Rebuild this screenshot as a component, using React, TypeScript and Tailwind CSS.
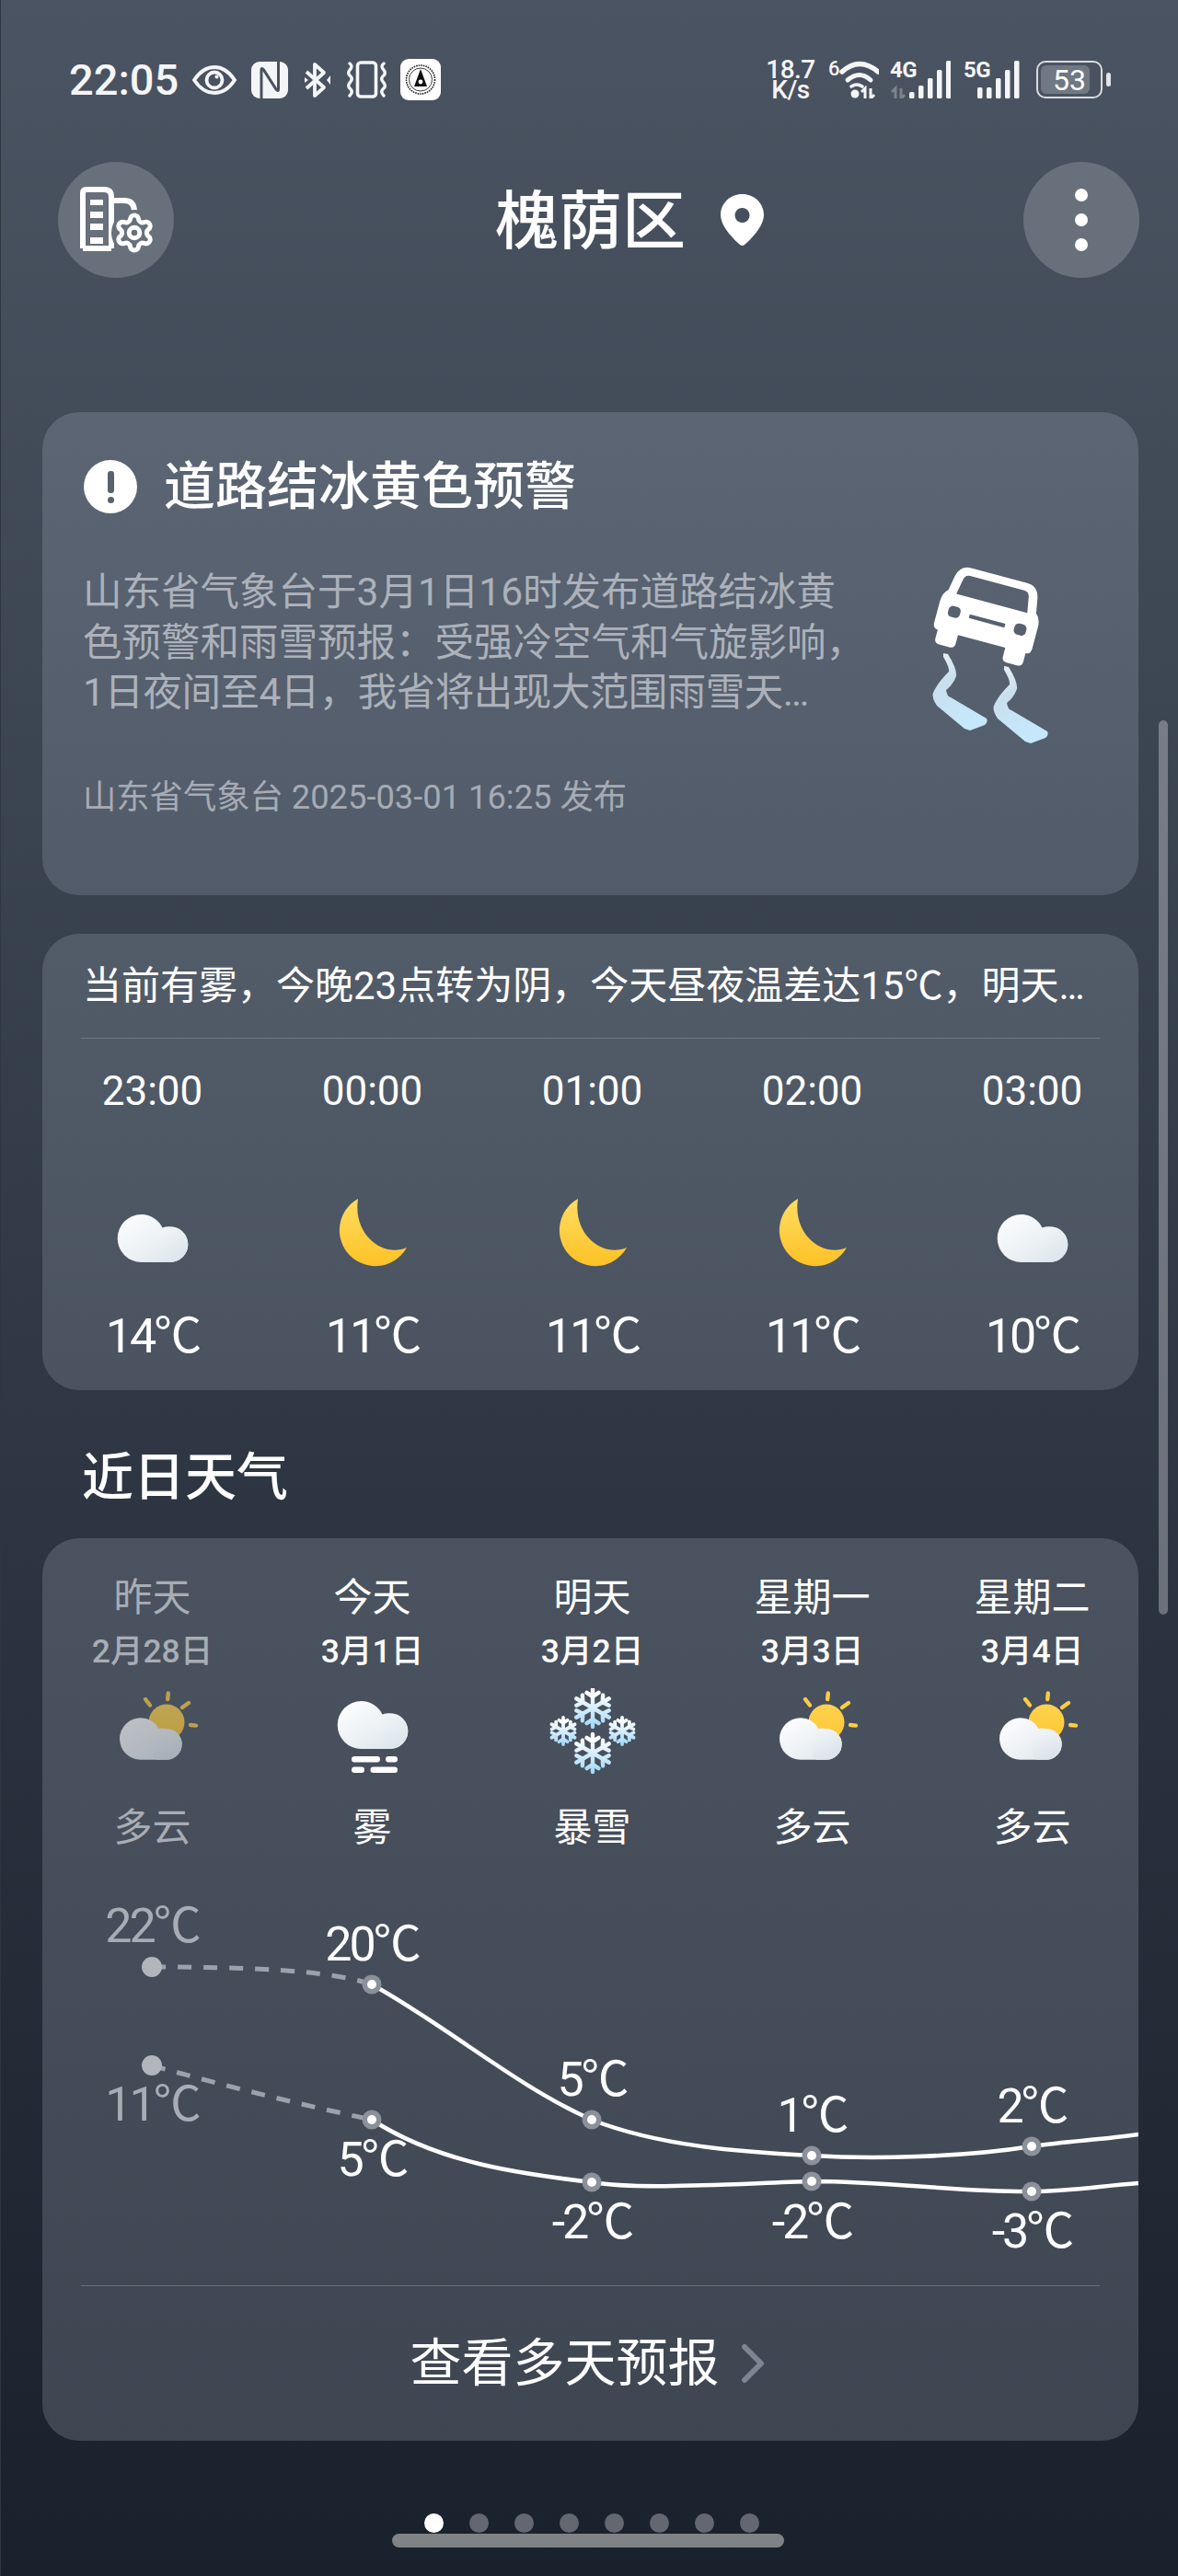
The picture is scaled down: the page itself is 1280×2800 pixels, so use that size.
import { Settings } from "lucide-react";

const hours = [
  { time: "23:00", temp: "14℃", icon: "cloud" },
  { time: "00:00", temp: "11℃", icon: "moon" },
  { time: "01:00", temp: "11℃", icon: "moon" },
  { time: "02:00", temp: "11℃", icon: "moon" },
  { time: "03:00", temp: "10℃", icon: "cloud" },
];

const days = [
  { name: "昨天", date: "2月28日", text: "多云", icon: "partly", past: true },
  { name: "今天", date: "3月1日", text: "雾", icon: "fog", past: false },
  { name: "明天", date: "3月2日", text: "暴雪", icon: "snow", past: false },
  { name: "星期一", date: "3月3日", text: "多云", icon: "partly", past: false },
  { name: "星期二", date: "3月4日", text: "多云", icon: "partly", past: false },
];

// chart markers, in the svg's own coordinates
const highs = [
  { x: 119, y: 127, label: "22℃", ly: 82 },
  { x: 358, y: 146, label: "20℃", ly: 102 },
  { x: 597, y: 293, label: "5℃", ly: 249 },
  { x: 836, y: 332, label: "1℃", ly: 288 },
  { x: 1075, y: 322, label: "2℃", ly: 278 },
];
const lows = [
  { x: 119, y: 234, label: "11℃", ly: 276 },
  { x: 358, y: 293, label: "5℃", ly: 336 },
  { x: 597, y: 361, label: "-2℃", ly: 404 },
  { x: 836, y: 360, label: "-2℃", ly: 404 },
  { x: 1075, y: 371, label: "-3℃", ly: 414 },
];

function CloudShape({ dy = 0 }: { dy?: number }) {
  return (
    <g transform={`translate(0 ${dy})`}>
      <defs>
        <linearGradient id="fogCloud" x1="0" y1="0" x2="1" y2="1">
          <stop offset="0" stopColor="#ffffff" />
          <stop offset="1" stopColor="#dbe5eb" />
        </linearGradient>
        <linearGradient id="fogLobe" x1="0" y1="0" x2="0.6" y2="1">
          <stop offset="0" stopColor="#f5f7f9" />
          <stop offset="1" stopColor="#dce6ec" />
        </linearGradient>
      </defs>
      <path
        d="M37.7,66 A26,26 0 0 1 37.7,14 A26,26 0 0 1 60.5,28.5 A19.3,19.3 0 0 1 69,27.4 A19.3,19.3 0 0 1 69,66 Z"
        fill="url(#fogCloud)"
      />
      <path d="M69,66 A19.3,19.3 0 0 0 69,27.4 A19.3,19.3 0 0 0 52.7,57 Q51,63 56,66 Z" fill="url(#fogLobe)" />
    </g>
  );
}

function PartlyIcon() {
  return (
    <svg viewBox="0 0 100 100" className="w-[100px] h-[100px]">
      <defs>
        <linearGradient id="sunFill" x1="0" y1="0" x2="0" y2="1">
          <stop offset="0" stopColor="#ffd34f" />
          <stop offset="1" stopColor="#fdc632" />
        </linearGradient>
        <linearGradient id="partCloud" x1="0" y1="0" x2="1" y2="1">
          <stop offset="0" stopColor="#ffffff" />
          <stop offset="1" stopColor="#dde6eb" />
        </linearGradient>
        <linearGradient id="partLobe" x1="0" y1="0" x2="0.5" y2="1">
          <stop offset="0" stopColor="#f4f6f8" />
          <stop offset="1" stopColor="#dbe4ea" />
        </linearGradient>
      </defs>
      <circle cx="65" cy="37" r="19.5" fill="url(#sunFill)" />
      <g stroke="#fdcb45" strokeWidth="4.4" strokeLinecap="round">
        <path d="M66.8,5.5 L66.2,12" />
        <path d="M42,12 L47,18.5" />
        <path d="M82,21 L89,16" />
        <path d="M91,40 L97,40.6" />
      </g>
      <path
        d="M36.7,77.7 A22.7,22.7 0 0 1 36.7,32.3 A22.7,22.7 0 0 1 56.5,44 A16.7,16.7 0 0 1 65,44.3 A16.7,16.7 0 0 1 65,77.7 Z"
        fill="url(#partCloud)"
      />
      <path d="M65,77.7 A16.7,16.7 0 0 0 65,44.3 A16.7,16.7 0 0 0 49.5,67 Q49,73 54,77.7 Z" fill="url(#partLobe)" />
    </svg>
  );
}

function FogIcon() {
  return (
    <svg viewBox="0 0 100 100" className="w-[100px] h-[100px]">
      <CloudShape />
      <g fill="#ffffff">
        <rect x="27" y="74" width="31" height="6.4" rx="3.2" />
        <rect x="64" y="74" width="13" height="6.4" rx="3.2" />
        <rect x="27" y="85.5" width="14" height="6.4" rx="3.2" />
        <rect x="47.5" y="85.5" width="29.5" height="6.4" rx="3.2" />
      </g>
    </svg>
  );
}

function flakePath(cx: number, cy: number, r: number) {
  let d = "";
  for (let i = 0; i < 6; i++) {
    const a = (i * Math.PI) / 3 - Math.PI / 2;
    const tip = [cx + r * Math.cos(a), cy + r * Math.sin(a)];
    d += `M${cx},${cy} L${tip[0]},${tip[1]} `;
    for (const side of [-1, 1]) {
      const bx = cx + r * 0.6 * Math.cos(a);
      const by = cy + r * 0.6 * Math.sin(a);
      const b = a + (side * Math.PI) / 3.2;
      d += `M${bx},${by} L${bx + r * 0.38 * Math.cos(b)},${by + r * 0.38 * Math.sin(b)} `;
    }
  }
  return d;
}

function SnowIcon() {
  const flakes = [
    { x: 50, y: 21.5, r: 20.5, w: 4.4 },
    { x: 18, y: 46.5, r: 14.5, w: 3.8 },
    { x: 82, y: 46.5, r: 14.5, w: 3.8 },
    { x: 50, y: 70.5, r: 20.5, w: 4.4 },
  ];
  return (
    <svg viewBox="0 0 100 100" className="w-[100px] h-[100px]">
      <defs>
        <linearGradient id="flake" x1="0" y1="0" x2="0" y2="1">
          <stop offset="0.1" stopColor="#ffffff" />
          <stop offset="1" stopColor="#a3d9f9" />
        </linearGradient>
      </defs>
      {flakes.map((f) => (
        <path
          key={`${f.x}-${f.y}`}
          d={flakePath(f.x, f.y, f.r)}
          stroke="url(#flake)"
          strokeWidth={f.w}
          strokeLinecap="round"
          fill="none"
        />
      ))}
    </svg>
  );
}

function MoonIcon() {
  return (
    <svg viewBox="0 0 100 100" className="w-[100px] h-[100px]">
      <defs>
        <linearGradient id="moonFill" x1="0" y1="0" x2="0" y2="1">
          <stop offset="0" stopColor="#ffdc62" />
          <stop offset="1" stopColor="#fdc226" />
        </linearGradient>
      </defs>
      <path
        d="M34,12 A39,39 0 1 0 87,65 C62,76 28,52 34,12 Z"
        fill="url(#moonFill)"
      />
    </svg>
  );
}

function BuildingIcon() {
  return (
    <svg viewBox="0 0 126 126" className="w-[126px] h-[126px]" fill="none">
      <g stroke="#ffffff" strokeWidth="6">
        <path d="M27,94 V34 Q27,30 31,30 H50 Q58,30 58,38 V94" strokeLinejoin="round" />
        <path d="M58,42 H72 Q83,42 83,54" strokeLinecap="round" />
        <path d="M27,94 H58" />
      </g>
      <g fill="#ffffff">
        <rect x="35" y="41" width="14" height="6" />
        <rect x="35" y="54" width="14" height="7" />
        <rect x="35" y="67" width="14" height="7" />
        <rect x="35" y="82" width="14" height="7" />
      </g>
      <circle cx="83" cy="77" r="25" fill="#67707b" />
      <Settings x={60} y={54} width={46} height={46} stroke="#ffffff" strokeWidth={2.6} />
    </svg>
  );
}

function CarIcon() {
  return (
    <svg viewBox="0 0 240 240" className="w-[240px] h-[240px] shrink-0 -mt-[37px]">
      <defs>
        <linearGradient id="track" x1="0" y1="0" x2="0.4" y2="1">
          <stop offset="0" stopColor="#f1f3f5" />
          <stop offset="0.4" stopColor="#c9dfee" />
          <stop offset="1" stopColor="#c6e8fc" />
        </linearGradient>
      </defs>
      <g transform="translate(115 86) rotate(15) scale(0.95)">
        <path
          fillRule="evenodd"
          fill="#ffffff"
          d="M-33,-44 L33,-44 Q46,-44 49,-30 L52,-13 Q58,-8 58,2 L58,27 Q58,34 52,34 L52,44 Q52,50 46,50 L34,50 Q28,50 28,44 L28,34 L-28,34 L-28,44 Q-28,50 -34,50 L-46,50 Q-52,50 -52,44 L-52,34 Q-58,34 -58,27 L-58,2 Q-58,-8 -52,-13 L-49,-30 Q-46,-44 -33,-44 Z M-32,-35 L32,-35 Q38,-35 39,-28 L42,-11 L-42,-11 L-39,-28 Q-38,-35 -32,-35 Z M-41,3 a5,5 0 0 0 -5,5 v3 a5,5 0 0 0 5,5 h4 a5,5 0 0 0 5,-5 v-3 a5,5 0 0 0 -5,-5 Z M37,3 a5,5 0 0 0 -5,5 v3 a5,5 0 0 0 5,5 h4 a5,5 0 0 0 5,-5 v-3 a5,5 0 0 0 -5,-5 Z M-21,7.5 h42 v4.5 h-42 Z"
        />
      </g>
      <path
        fill="url(#track)"
        d="M65,130 L70,131 Q80,147 79,155 Q75,165 68,170 Q69,177 73,178 L112,201 Q114,205 110,208 L94,214 L88,212 L58,187 Q52,178 54,173 Q58,163 71,150 Q72,146 65,134 Z"
      />
      <path
        fill="url(#track)"
        transform="translate(66 14)"
        d="M65,130 L70,131 Q80,147 79,155 Q75,165 68,170 Q69,177 73,178 L112,201 Q114,205 110,208 L94,214 L88,212 L58,187 Q52,178 54,173 Q58,163 71,150 Q72,146 65,134 Z"
      />
    </svg>
  );
}

function StatusLeftIcons() {
  return (
    <div className="flex items-center">
      {/* eye */}
      <svg viewBox="0 0 48 32" className="w-[48px] h-[32px] ml-[15px]" fill="none">
        <path
          d="M2,16 C10,4 18,2 24,2 C30,2 38,4 46,16 C38,28 30,30 24,30 C18,30 10,28 2,16 Z"
          stroke="#f4f5f7"
          strokeWidth="3.8"
        />
        <circle cx="24" cy="16" r="8.5" stroke="#f4f5f7" strokeWidth="3.8" />
        <circle cx="26.5" cy="12.5" r="2" fill="#f4f5f7" />
      </svg>
      {/* nfc */}
      <svg viewBox="0 0 40 40" className="w-[40px] h-[40px] ml-[16px]">
        <rect width="40" height="40" rx="9" fill="#f4f5f7" />
        <path
          d="M11,40 V9 Q11,6 13.5,9 L27,30 Q29.5,33 29.5,30 V0"
          fill="none"
          stroke="#49525e"
          strokeWidth="3"
        />
      </svg>
      {/* bluetooth */}
      <svg viewBox="0 0 32 40" className="w-[32px] h-[40px] ml-[15px]" fill="none">
        <path
          d="M5,11 L24,28 L14,37 V3 L24,12 L5,29"
          stroke="#f4f5f7"
          strokeWidth="3.8"
          strokeLinejoin="round"
        />
        <path d="M3,17 L7,20 L3,23 Z M31,15 L27,20 L31,25 Z" fill="#f4f5f7" />
      </svg>
      {/* vibrate */}
      <svg viewBox="0 0 47 41" className="w-[47px] h-[41px] ml-[15px]" fill="none" stroke="#f4f5f7">
        <rect x="13.5" y="2" width="20" height="37" rx="3.5" strokeWidth="3.6" />
        <path
          d="M5,3 Q9,6 5,10 Q2,14 6,17 Q9,20 5,24 Q2,28 6,31 Q9,34 5,38"
          strokeWidth="3.4"
          strokeLinecap="round"
        />
        <path
          d="M42,3 Q38,6 42,10 Q45,14 41,17 Q38,20 42,24 Q45,28 41,31 Q38,34 42,38"
          strokeWidth="3.4"
          strokeLinecap="round"
        />
      </svg>
      {/* app notification badge */}
      <svg viewBox="0 0 44 45" className="w-[44px] h-[45px] ml-[13px]" fill="none">
        <rect width="44" height="45" rx="9" fill="#ffffff" />
        <circle cx="22" cy="22.5" r="15.5" stroke="#222222" strokeWidth="1.6" strokeDasharray="1.6 1" />
        <circle cx="22" cy="22.5" r="12.5" stroke="#222222" strokeWidth="0.9" />
        <path d="M22,11 L29,30 H15 Z" fill="#111111" />
        <circle cx="22" cy="25" r="2.4" fill="#ffffff" />
      </svg>
    </div>
  );
}

function StatusRightIcons() {
  const bars4g = [
    { x: 0, h: 7 },
    { x: 10, h: 14 },
    { x: 20, h: 22 },
    { x: 30, h: 31 },
    { x: 40, h: 41 },
  ];
  const bars5g = [
    { x: 0, h: 12 },
    { x: 10, h: 12 },
    { x: 20, h: 22 },
    { x: 30, h: 31 },
    { x: 40, h: 41 },
  ];
  return (
    <div className="flex items-center font-medium text-[#f4f5f7]">
      <div className="flex flex-col items-center text-[28px] leading-[22px] w-[56px] tracking-[-0.5px]">
        <span>18.7</span>
        <span>K/s</span>
      </div>
      {/* wifi */}
      <div className="relative w-[55px] h-[41px] ml-[13px]">
        <span className="absolute left-0 top-[-5px] text-[22px] leading-[28px]">6</span>
        <svg viewBox="0 0 55 41" className="w-[55px] h-[41px]" fill="none">
          <path d="M15,12 Q34,-5 54,12" stroke="#f4f5f7" strokeWidth="5.5" strokeLinecap="round" />
          <path d="M21,21 Q34,10 46,21" stroke="#f4f5f7" strokeWidth="5" strokeLinecap="round" />
          <circle cx="29" cy="36" r="4.5" fill="#f4f5f7" />
          <path d="M25,28 Q31,24 37,28" stroke="#f4f5f7" strokeWidth="3.6" strokeLinecap="round" />
          <path d="M40,41 V30 L36,34 M46,30 V41 L50,37" stroke="#f4f5f7" strokeWidth="3" />
        </svg>
      </div>
      {/* first sim */}
      <div className="relative w-[66px] h-[41px] ml-[12px]">
        <span className="absolute left-0 top-[-5px] text-[24px] leading-[30px] font-bold tracking-[-0.5px]">4G</span>
        <svg viewBox="0 0 66 41" className="absolute left-0 top-0 w-[66px] h-[41px]" fill="none">
          <path d="M6,41 V30 L2,34 M12,30 V41 L16,37" stroke="#7b828c" strokeWidth="3" />
          {bars4g.map((b) => (
            <rect key={b.x} x={21 + b.x} y={41 - b.h} width="5.5" height={b.h} rx="1.5" fill="#f4f5f7" />
          ))}
        </svg>
      </div>
      {/* second sim */}
      <div className="relative w-[65px] h-[41px] ml-[14px]">
        <span className="absolute left-0 top-[-5px] text-[24px] leading-[30px] font-bold tracking-[-0.5px]">5G</span>
        <svg viewBox="0 0 65 41" className="absolute left-0 top-0 w-[65px] h-[41px]" fill="none">
          {bars5g.map((b) => (
            <rect key={b.x} x={15 + b.x} y={41 - b.h} width="5.5" height={b.h} rx="1.5" fill="#f4f5f7" />
          ))}
        </svg>
      </div>
      {/* battery */}
      <div className="relative w-[72px] h-[41px] ml-[14px] rounded-[10px] border-[2.5px] border-[#d9dce0] overflow-hidden">
        <div className="absolute left-[3px] top-[3px] bottom-[3px] w-[53px] rounded-[6px] bg-[#707884]" />
        <span className="absolute inset-0 flex items-center justify-center text-[32px] leading-none font-normal text-white">
          53
        </span>
      </div>
      <div className="w-[5px] h-[15px] ml-[4px] rounded-full bg-[#e2e4e7]" />
    </div>
  );
}

function TempChart() {
  return (
    <svg viewBox="0 0 1191 473" className="w-[1191px] h-[473px] block" fill="none">
      <path
        d="M119,127 C220,127 310,130 358,146"
        stroke="#9ca2ab"
        strokeWidth="5"
        strokeDasharray="15 13"
      />
      <path
        d="M119,234 Q240,268 358,293"
        stroke="#9ca2ab"
        strokeWidth="5"
        strokeDasharray="15 13"
      />
      <path
        d="M358,146 C438,190 517,258 597,293 C670,322 760,328 836,332 C900,336 1000,334 1075,322 C1115,316 1150,315 1191,309"
        stroke="#ffffff"
        strokeWidth="4.5"
      />
      <path
        d="M358,293 C430,340 520,352 597,361 C650,370 760,362 836,360 C920,360 1000,372 1075,371 C1115,371 1150,365 1191,362"
        stroke="#ffffff"
        strokeWidth="4.5"
      />
      {[...highs, ...lows].map((p, i) => {
        const past = i === 0 || i === 5;
        return (
          <g key={`${p.x}-${p.y}`}>
            <circle cx={p.x} cy={p.y} r={past ? 11 : 10.5} fill={past ? "#b1b5bc" : "#8b919b"} />
            {!past && <circle cx={p.x} cy={p.y} r="5" fill="#ffffff" />}
            <text
              x={p.x}
              y={p.ly}
              textAnchor="middle"
              dominantBaseline="central"
              fill={past ? "#a8adb5" : "#ffffff"}
              className="text-[52px] tracking-[-3px]"
            >
              {p.label}
            </text>
          </g>
        );
      })}
    </svg>
  );
}

export default function App() {
  return (
    <div className="relative w-[1280px] h-[2800px] overflow-hidden bg-linear-to-b from-[#4b5462] to-[#19212c] pt-[64px] font-['Roboto','Noto_Sans_CJK_SC',sans-serif] text-white">
      <div className="flex items-center justify-between h-[45px] pl-[75px] pr-[73px]">
        <div className="flex items-center">
          <span className="text-[47px] leading-none font-medium text-[#f4f5f7]">22:05</span>
          <StatusLeftIcons />
        </div>
        <StatusRightIcons />
      </div>

      <div className="flex items-center h-[126px] mt-[67px] pl-[63px]">
        <div className="w-[126px] h-[126px] rounded-full bg-[#67707b] shrink-0">
          <BuildingIcon />
        </div>
        <h1 className="ml-[349px] pt-[4px] w-[205px] text-[69px] leading-none font-medium whitespace-nowrap">槐荫区</h1>
        <svg viewBox="0 0 47 56" className="w-[47px] h-[56px] ml-[40px]">
          <path
            fillRule="evenodd"
            fill="#ffffff"
            d="M23.5,0 C36.5,0 47,10 47,22.5 C47,35 33,49 26,55 Q23.5,57 21,55 C14,49 0,35 0,22.5 C0,10 10.5,0 23.5,0 Z M23.5,15 a8,8 0 1 0 0.01,0 Z"
          />
        </svg>
        <div className="ml-[282px] w-[126px] h-[126px] rounded-full bg-[#67707b] flex flex-col items-center justify-center gap-[13px] shrink-0">
          <span className="w-[14px] h-[14px] rounded-full bg-white" />
          <span className="w-[14px] h-[14px] rounded-full bg-white" />
          <span className="w-[14px] h-[14px] rounded-full bg-white" />
        </div>
      </div>

      {/* warning card */}
      <section className="ml-[46px] mt-[146px] w-[1191px] h-[525px] rounded-[40px] bg-linear-to-b from-[#5b6573] to-[#525b69] pl-[44px] pt-[52px]">
        <div className="flex items-center h-[58px]">
          <div className="ml-[1px] w-[58px] h-[58px] rounded-full bg-white flex flex-col items-center justify-center gap-[4px]">
            <span className="w-[7px] h-[24px] rounded-[3px] bg-[#59626f]" />
            <span className="w-[7px] h-[7px] rounded-full bg-[#59626f]" />
          </div>
          <h2 className="ml-[29px] text-[56px] leading-none font-medium whitespace-nowrap">道路结冰黄色预警</h2>
        </div>
        <div className="flex h-[163px] mt-[59px]">
          <div className="w-[870px] text-[42.5px] leading-[54.5px] text-[#acb1ba] whitespace-nowrap">
            <p>山东省气象台于3月1日16时发布道路结冰黄</p>
            <p>色预警和雨雪预报：受强冷空气和气旋影响，</p>
            <p className="tracking-[-0.5px]">1日夜间至4日，我省将出现大范围雨雪天…</p>
          </div>
          <CarIcon />
        </div>
        <p className="mt-[65px] text-[36.3px] leading-[44px] text-[#a6abb4] whitespace-nowrap">
          山东省气象台 2025-03-01 16:25 发布
        </p>
      </section>

      {/* hourly forecast */}
      <section className="ml-[46px] mt-[42px] w-[1191px] h-[496px] rounded-[40px] bg-linear-to-b from-[#525c69] to-[#4a535f] pt-[27px]">
        <p className="pl-[44px] text-[42px] leading-[60px] whitespace-nowrap">
          当前有雾，今晚23点转为阴，今天昼夜温差达15℃，明天…
        </p>
        <div className="h-px mx-[42px] mt-[26px] bg-[#6f7783]" />
        <div className="grid grid-cols-[repeat(5,239px)] mt-[32px]">
          {hours.map((h) => (
            <div key={h.time} className="flex flex-col items-center">
              <span className="text-[44px] leading-[50px]">{h.time}</span>
              <div className="mt-[80px] w-[100px] h-[100px]">
                {h.icon === "moon" ? (
                  <MoonIcon />
                ) : (
                  <svg viewBox="0 0 100 100" className="w-[100px] h-[100px]">
                    <CloudShape dy={15} />
                  </svg>
                )}
              </div>
              <span className="mt-[32px] text-[52px] leading-[60px] tracking-[-3px]">{h.temp}</span>
            </div>
          ))}
        </div>
      </section>

      <h2 className="ml-[89px] mt-[60px] text-[56px] leading-[70px] font-medium">近日天气</h2>

      {/* multi-day forecast */}
      <section className="ml-[46px] mt-[31px] w-[1191px] h-[981px] rounded-[40px] overflow-hidden bg-linear-to-b from-[#4a535f] to-[#3e4652] pt-[41px]">
        <div className="grid grid-cols-[repeat(5,239px)]">
          {days.map((d) => (
            <div key={d.name} className={`flex flex-col items-center ${d.past ? "text-[#a8adb5]" : "text-white"}`}>
              <span className="text-[42px] leading-[48px]">{d.name}</span>
              <span className="mt-[12px] text-[35.5px] leading-[44px] font-medium">{d.date}</span>
              <div className={`mt-[18px] w-[100px] h-[100px] ${d.past ? "opacity-65" : ""}`}>
                {d.icon === "partly" && <PartlyIcon />}
                {d.icon === "fog" && <FogIcon />}
                {d.icon === "snow" && <SnowIcon />}
              </div>
              <span className="mt-[28px] text-[42px] leading-[48px]">{d.text}</span>
            </div>
          ))}
        </div>
        <TempChart />
        <div className="h-px mx-[42px] bg-[#666e7a]" />
        <div className="flex items-center justify-center h-[168px] pr-[6px]">
          <span className="text-[56px] leading-none">查看多天预报</span>
          <svg viewBox="0 0 27 44" className="w-[27px] h-[44px] ml-[23px]" fill="none">
            <path d="M4,4 L22,22 L4,40" stroke="#7d8591" strokeWidth="6" strokeLinecap="round" strokeLinejoin="round" />
          </svg>
        </div>
      </section>

      {/* scrollbar, page dots and home indicator float over the page */}
      <div className="absolute left-0 top-0 bottom-0 w-px bg-[#2f3641]" />
      <div className="absolute left-[1259px] top-[783px] w-[10px] h-[972px] rounded-full bg-white/30" />
      <div className="absolute left-[461px] top-[2732px] flex gap-[28px]">
        <span className="w-[21px] h-[21px] rounded-full bg-white" />
        {[1, 2, 3, 4, 5, 6, 7].map((n) => (
          <span key={n} className="w-[21px] h-[21px] rounded-full bg-[#636870]" />
        ))}
      </div>
      <div className="absolute left-[426px] top-[2754px] w-[426px] h-[15px] rounded-full bg-[#808386]" />
    </div>
  );
}
